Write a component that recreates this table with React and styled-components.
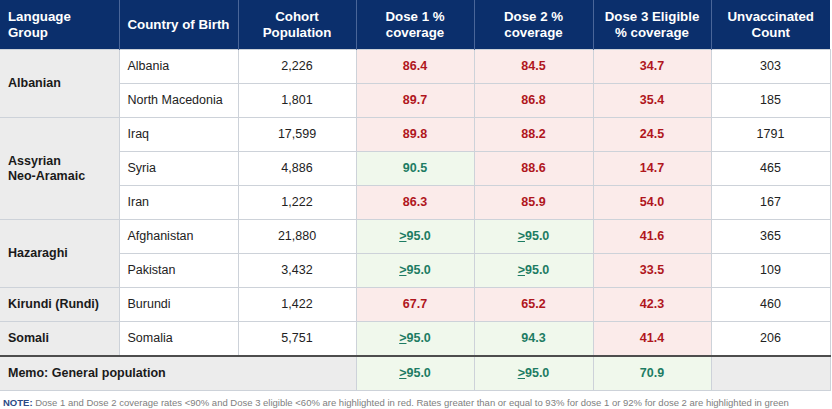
import React from 'react';
import styled, { createGlobalStyle } from 'styled-components';

const GlobalStyle = createGlobalStyle`
  body {
    margin: 0;
    background: #ffffff;
    font-family: "Liberation Sans", Arial, sans-serif;
  }
`;

const Wrapper = styled.div`
  width: 832px;
  height: 409px;
  overflow: hidden;
  background: #fff;
`;

const Table = styled.table`
  width: 830px;
  border-collapse: collapse;
  table-layout: fixed;
  font-family: "Liberation Sans", Arial, sans-serif;
`;

const HeadCell = styled.th`
  background: #0b2f6c;
  color: #fff;
  font-size: 13.3px;
  font-weight: bold;
  line-height: 16px;
  height: 49px;
  padding: 0 8px;
  text-align: ${p => (p.$left ? 'left' : 'center')};
  border-left: 1px solid #4a6699;
  vertical-align: middle;
  &:first-child {
    border-left: none;
  }
`;

const bgFor = tone => {
  switch (tone) {
    case 'red': return '#fbebea';
    case 'green': return '#f0f8ec';
    case 'grey': return '#ececec';
    default: return '#ffffff';
  }
};

const Cell = styled.td`
  height: 33px;
  padding: 0 8px;
  font-size: 12.5px;
  line-height: 15px;
  color: #222;
  background: ${p => bgFor(p.$tone)};
  border: 1px solid #cdd2d9;
  text-align: ${p => (p.$left ? 'left' : 'center')};
  vertical-align: middle;
  border-top: ${p => (p.$thick ? '2px solid #4d4d4d' : '1px solid #cdd2d9')};
`;

const GroupCell = styled(Cell)`
  background: #ececec;
  font-weight: bold;
  color: #1a1a1a;
  border-left: none;
`;

const Rate = styled(Cell)`
  font-weight: bold;
  color: ${p => (p.$tone === 'green' ? '#1d7c63' : '#b0161d')};
`;

const Ge = styled.span`
  text-decoration: underline;
`;

const Note = styled.p`
  margin: 6px 0 0 3px;
  font-size: 9.5px;
  color: #808080;
  white-space: nowrap;
`;

const NoteLabel = styled.span`
  font-weight: bold;
  color: #2b4a85;
`;

const headers = [
  { label: 'Language\nGroup', left: true },
  { label: 'Country of Birth', left: true },
  { label: 'Cohort\nPopulation' },
  { label: 'Dose 1 %\ncoverage' },
  { label: 'Dose 2 %\ncoverage' },
  { label: 'Dose 3 Eligible\n% coverage' },
  { label: 'Unvaccinated\nCount' },
];

const groups = [
  {
    name: 'Albanian',
    rows: [
      ['Albania', '2,226', ['86.4', 'red'], ['84.5', 'red'], ['34.7', 'red'], '303'],
      ['North Macedonia', '1,801', ['89.7', 'red'], ['86.8', 'red'], ['35.4', 'red'], '185'],
    ],
  },
  {
    name: 'Assyrian\nNeo-Aramaic',
    rows: [
      ['Iraq', '17,599', ['89.8', 'red'], ['88.2', 'red'], ['24.5', 'red'], '1791'],
      ['Syria', '4,886', ['90.5', 'green'], ['88.6', 'red'], ['14.7', 'red'], '465'],
      ['Iran', '1,222', ['86.3', 'red'], ['85.9', 'red'], ['54.0', 'red'], '167'],
    ],
  },
  {
    name: 'Hazaraghi',
    rows: [
      ['Afghanistan', '21,880', ['>95.0', 'green'], ['>95.0', 'green'], ['41.6', 'red'], '365'],
      ['Pakistan', '3,432', ['>95.0', 'green'], ['>95.0', 'green'], ['33.5', 'red'], '109'],
    ],
  },
  {
    name: 'Kirundi (Rundi)',
    rows: [['Burundi', '1,422', ['67.7', 'red'], ['65.2', 'red'], ['42.3', 'red'], '460']],
  },
  {
    name: 'Somali',
    rows: [['Somalia', '5,751', ['>95.0', 'green'], ['94.3', 'green'], ['41.4', 'red'], '206']],
  },
];

const Multi = ({ text }) =>
  text.split('\n').map((line, i) => (
    <React.Fragment key={i}>
      {i > 0 && <br />}
      {line}
    </React.Fragment>
  ));

const RateValue = ({ value }) =>
  value.startsWith('>') ? (
    <>
      <Ge>&gt;</Ge>
      {value.slice(1)}
    </>
  ) : (
    value
  );

const widths = [119, 119, 118, 118, 119, 118, 119];

export default function App() {
  return (
    <Wrapper>
      <GlobalStyle />
      <Table>
        <colgroup>
          {widths.map((w, i) => (
            <col key={i} style={{ width: w }} />
          ))}
        </colgroup>
        <thead>
          <tr>
            {headers.map(h => (
              <HeadCell key={h.label} $left={h.left}>
                <Multi text={h.label} />
              </HeadCell>
            ))}
          </tr>
        </thead>
        <tbody>
          {groups.map(g =>
            g.rows.map((r, i) => (
              <tr key={r[0]}>
                {i === 0 && (
                  <GroupCell $left rowSpan={g.rows.length}>
                    <Multi text={g.name} />
                  </GroupCell>
                )}
                <Cell $left>{r[0]}</Cell>
                <Cell>{r[1]}</Cell>
                {[r[2], r[3], r[4]].map(([v, tone], j) => (
                  <Rate key={j} $tone={tone}>
                    <RateValue value={v} />
                  </Rate>
                ))}
                <Cell>{r[5]}</Cell>
              </tr>
            ))
          )}
          <tr>
            <GroupCell $left $thick colSpan={3}>
              Memo: General population
            </GroupCell>
            <Rate $tone="green" $thick>
              <RateValue value=">95.0" />
            </Rate>
            <Rate $tone="green" $thick>
              <RateValue value=">95.0" />
            </Rate>
            <Rate $tone="green" $thick>70.9</Rate>
            <Cell $tone="grey" $thick />
          </tr>
        </tbody>
      </Table>
      <Note>
        <NoteLabel>NOTE:</NoteLabel> Dose 1 and Dose 2 coverage rates &lt;90% and Dose 3 eligible &lt;60% are
        highlighted in red. Rates greater than or equal to 93% for dose 1 or 92% for dose 2 are highlighted in green
      </Note>
    </Wrapper>
  );
}
